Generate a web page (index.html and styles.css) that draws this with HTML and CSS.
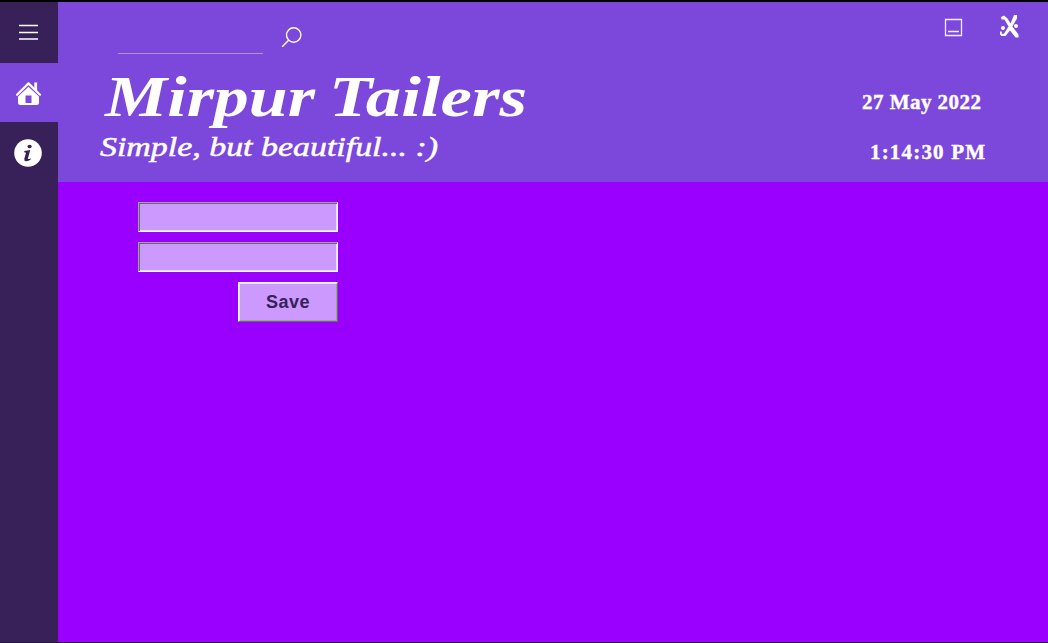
FILE: index.html
```html
<!DOCTYPE html>
<html lang="en">
<head>
<meta charset="utf-8">
<title>Mirpur Tailers</title>
<link rel="stylesheet" href="styles.css">
</head>
<body>
<div class="window">
  <nav class="sidebar">
    <a class="nav-item menu"><svg width="58" height="61" viewBox="0 2 58 61"><path d="M19 25.500h19M19 32.500h19M19 39h19" stroke="#fff" stroke-width="1.400"/></svg></a>
    <a class="nav-item active"><svg width="58" height="59" viewBox="0 63 58 59"><path d="M17 94.700 28.500 83.400 40 94.700" fill="none" stroke="#fff" stroke-width="2.200" stroke-linecap="round" stroke-linejoin="round"/><path d="M34.300 82.500h2.800v8.500l-2.800-2.700z" fill="#fff"/><path fill="#fff" fill-rule="evenodd" d="M28.500 86.700 39 96.600V102.500Q39 105 36.500 105H20.500Q18 105 18 102.500V96.600ZM25.500 95.500V103H31.500V95.500Z"/></svg></a>
    <a class="nav-item"><svg width="58" height="61" viewBox="0 122 58 61"><circle cx="28" cy="153" r="13.800" fill="#fff"/><ellipse cx="29.600" cy="146.500" rx="2.100" ry="1.800" fill="#372158"/><path d="M24.300 151 30.200 150 27.900 158.400Q27.600 159.800 30.800 158.200L30.500 159.700Q23.700 163.200 24.300 158.700L26 152.700 24.200 152.300Z" fill="#372158"/></svg></a>
  </nav>
  <div class="page">
    <header class="header">
      <div class="toolbar">
        <div class="search"><input class="search-input" type="text" aria-label="Search"><svg class="search-icon" width="22" height="24" viewBox="281 25 22 24" fill="none" stroke="#fff" stroke-width="1.400"><circle cx="293.700" cy="35" r="7.200"/><path d="m288.600 40.300-6.400 6.400"/></svg></div>
        <svg class="controls" width="78" height="30" viewBox="943 12 78 30"><path d="M945.500 19.500h16v16h-16zM948 31.500h11" fill="none" stroke="#f5edff" stroke-width="1.300"/><path d="M1001 17L1004 15.500 1007.500 18.500 1010.500 23.500 1014 15H1017V18.500L1012.300 26.500 1018.500 34.500V37.500H1015.500L1010 30.500 1005.500 36H1001.500L1000 34.500V31.500H1001.800V33.800H1004L1008.500 26.500 1004.500 19.500H1001.500Z" fill="#fff"/><circle cx="1003" cy="28" r="2" fill="#fff"/><circle cx="1016" cy="26" r="2" fill="#fff"/></svg>
      </div>
      <div class="branding">
        <svg class="brand" width="450" height="116" viewBox="90 60 450 116">
          <text class="title" x="105" y="116" textLength="210" lengthAdjust="spacingAndGlyphs">Mirpur</text>
          <text class="title" x="329" y="116" textLength="198" lengthAdjust="spacingAndGlyphs">Tailers</text>
          <text class="subtitle" x="100" y="156" textLength="338" lengthAdjust="spacingAndGlyphs">Simple, but beautiful... :)</text>
        </svg>
        <svg class="clock" width="140" height="90" viewBox="855 84 140 90">
          <text class="clock-text" x="862" y="109" textLength="119">27 May 2022</text>
          <text class="clock-text" x="870" y="159" textLength="115">1:14:30 PM</text>
        </svg>
      </div>
    </header>
    <main class="content">
      <form class="form">
        <input class="field" type="text" aria-label="Name">
        <input class="field" type="text" aria-label="Details">
        <button class="save" type="button">Save</button>
      </form>
    </main>
  </div>
</div>
</body>
</html>
```
FILE: styles.css
```css
* { box-sizing: border-box; }
body { margin: 0; overflow: hidden; }
.window { display: flex; width: 1048px; height: 643px; border-top: 2px solid #000; border-bottom: 1px solid #261838; }
.sidebar { width: 58px; background: #372158; }
.nav-item { display: block; height: 61px; }
.nav-item.active { height: 59px; background: #7b48db; }
.nav-item svg, .search-icon, .controls, .brand, .clock { display: block; }
.page { display: flex; flex: 1; flex-direction: column; }
.header { height: 180px; background: #7b48db; }
.toolbar { display: flex; justify-content: space-between; height: 58px; padding: 10px 27px 0 60px; }
.search { display: flex; gap: 18px; padding-top: 13px; height: 42px; }
.search-input { width: 145px; height: 29px; padding: 0; border: 0; border-bottom: 1px solid #ae94cb; background: transparent; outline: 0; }
.branding { display: flex; justify-content: space-between; padding: 0 53px 0 32px; }
.brand { overflow: visible; }
.clock { margin-top: 24px; }
.title { font: italic bold 58px "Liberation Serif", serif; fill: #fff; }
.subtitle { font: italic 28px "Liberation Serif", serif; fill: #fff; stroke: #fff; stroke-width: .5px; }
.clock-text { font: bold 21px "Liberation Serif", serif; fill: #fff; stroke: #fff; stroke-width: .4px; }
.content { flex: 1; padding: 20px 80px; background: #9900ff; }
.form { display: flex; width: 200px; flex-direction: column; gap: 10px; }
.field { width: 200px; height: 30px; background: #cc99ff; border: 1px solid; border-color: #a0a0a0 #fff #fff #a0a0a0; border-radius: 0; box-shadow: inset 1px 1px #696969, inset -1px -1px #e3e3e3; outline: 0; }
.save { align-self: flex-end; width: 100px; height: 40px; padding: 0; color: #372158; background: #cc99ff; border: 1px solid; border-color: #fff #696969 #696969 #fff; border-radius: 0; box-shadow: inset 1px 1px #e3e3e3, inset -1px -1px #a0a0a0; font: bold 18px "Liberation Sans", sans-serif; letter-spacing: .5px; }
```
